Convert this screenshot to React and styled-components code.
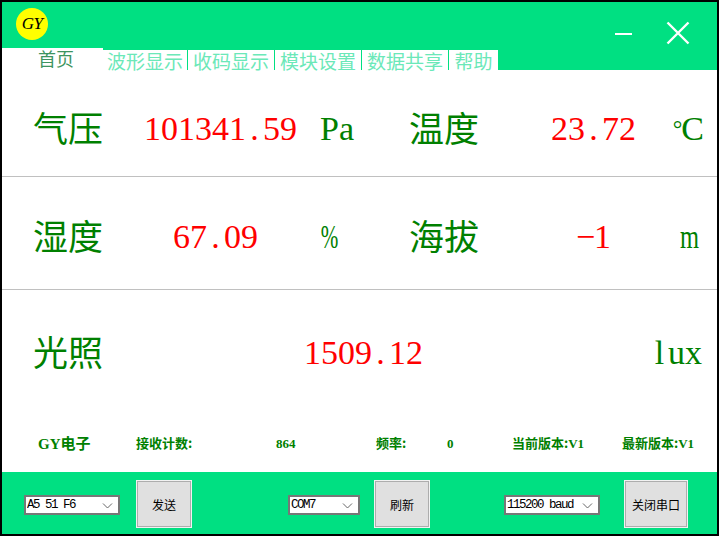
import React from 'react';
import styled, { createGlobalStyle } from 'styled-components';

const CJK = '"Noto Sans CJK SC", sans-serif';
const SERIF = '"Liberation Serif", "Noto Sans CJK SC", serif';
const GREEN = '#00e082';

const Global = createGlobalStyle`
  html, body { margin: 0; padding: 0; overflow: hidden; background: #000; }
  * { box-sizing: border-box; }
`;

const Win = styled.div`
  width: 719px; height: 536px; border: 2px solid #000; background: #fff;
  display: flex; flex-direction: column; font-family: ${SERIF}; overflow: hidden;
`;
const TitleBar = styled.header`
  height: 46px; flex: none; background: ${GREEN}; display: flex; align-items: flex-start;
  justify-content: space-between; padding: 6px 27px 0 14px;
`;
const Logo = styled.div`
  width: 32px; height: 32px; border-radius: 50%; background: #ffff00; color: #000;
  display: flex; align-items: center; justify-content: center;
  font: italic 17px "Liberation Serif", serif; letter-spacing: -0.5px;
`;
const WinControls = styled.div`display: flex; gap: 34px; padding-top: 12px;`;
const Icon = styled.svg`display: block; flex: none;`;

const TabBar = styled.nav`
  height: 22px; flex: none; display: flex; gap: 1px; align-items: flex-end;
  background: ${GREEN};
`;
const ActiveTab = styled.div`
  width: 101px; height: 22px; margin-right: -1px; background: #fff; color: #3d9460;
  font: 18px/20px ${CJK}; padding-left: 36px;
`;
const Tab = styled.div`
  height: 20px; width: ${p => p.$w}px; background: #fff; color: #6be8b8; text-align: center;
  font: 19px/21px ${CJK}; white-space: nowrap;
`;

const Row = styled.section`
  height: ${p => p.$h}px; flex: none; padding: ${p => p.$top}px 0 0 31px;
  border-bottom: ${p => (p.$line ? '1px solid #c0c0c0' : 'none')};
  display: grid; grid-template-columns: 111px 176px 89px 71px 1fr 70px; align-items: start; align-content: start;
`;
const WideRow = styled(Row)`grid-template-columns: 271px 1fr 70px;`;
const Label = styled.div`color: #008000; font: 35px/46px ${CJK};`;
const Value = styled.div`
  color: #ff0000; font: 34px/50px ${SERIF}; padding-left: ${p => p.$indent || 0}px; white-space: nowrap;
`;
const Ch = styled.span`
  display: inline-flex; width: 0.5em; justify-content: center;
  transform: scaleX(${p => p.$squeeze || 1});
`;
const Unit = styled.div`
  color: #008000; font: 34px/50px ${SERIF}; white-space: nowrap;
  text-align: ${p => (p.$end ? 'right' : 'left')}; padding-right: ${p => p.$end || 0}px;
  padding-left: ${p => p.$start || 0}px;
`;
const Degrees = styled.span`font-size: 24px; vertical-align: 3px; letter-spacing: -2px; margin-right: 1px;`;

const Status = styled.div`
  flex: 1; display: grid; grid-template-columns: 98px 140px 100px 71px 65px 110px 1fr;
  padding: 10px 0 0 36px; align-content: start; align-items: center; color: #008000;
  font: bold 13px/26px ${SERIF}; white-space: nowrap;
`;
const Brand = styled.div`font: bold 15px/26px ${SERIF};`;
const CN = styled.span`font-family: ${CJK};`;

const Footer = styled.footer`
  height: 62px; flex: none; background: ${GREEN}; display: flex; align-items: center;
  padding: 2px 0 0 22px;
`;
const SelectBox = styled.div`
  position: relative; width: ${p => p.$w}px; height: 20px; margin-right: ${p => p.$gap}px;
  margin-top: 2px; flex: none;
`;
const Select = styled.select`
  appearance: none; width: 100%; height: 100%; display: block; background: #fff; color: #000;
  border: 2px solid #777; border-radius: 0;
  padding: 0 0 0 1px; font: 12.5px "Liberation Mono", monospace; letter-spacing: -1.5px;
`;
const Chevron = styled.svg`position: absolute; right: 7px; top: 8px; pointer-events: none;`;
const Button = styled.button`
  width: ${p => p.$w}px; height: 48px; flex: none; margin-right: ${p => p.$gap}px;
  background: #e0e0e0; border: 1px solid #f2f2f2; outline: 1px solid #adadad; outline-offset: -2px;
  color: #000; font: 12px ${CJK}; padding: 0; border-radius: 0;
`;

const Num = ({ text }) => [...text].map((c, i) => <Ch key={i}>{c}</Ch>);
const Sel = ({ w, gap, children }) => (
  <SelectBox $w={w} $gap={gap}>
    <Select defaultValue={children}><option>{children}</option></Select>
    <Chevron width="11" height="6" viewBox="0 0 11 6" fill="none" stroke="#666" strokeWidth="1">
      <path d="M1 0.5l4.5 4.5 4.5-4.5" />
    </Chevron>
  </SelectBox>
);

export default function App() {
  return (
    <>
      <Global />
      <Win>
        <TitleBar>
          <Logo>GY</Logo>
          <WinControls>
            <Icon width="18" height="24" viewBox="0 0 18 24" stroke="#fff" strokeWidth="2"><path d="M1 14h17" /></Icon>
            <Icon width="24" height="24" viewBox="0 0 24 24" stroke="#fff" strokeWidth="2.4" style={{ marginTop: 1 }}><path d="M1.5 1.5l21 21M22.5 1.5l-21 21" /></Icon>
          </WinControls>
        </TitleBar>
        <TabBar>
          <ActiveTab>首页</ActiveTab>
          <Tab $w={84}>波形显示</Tab>
          <Tab $w={86}>收码显示</Tab>
          <Tab $w={86}>模块设置</Tab>
          <Tab $w={86}>数据共享</Tab>
          <Tab $w={49}>帮助</Tab>
        </TabBar>
        <Row $h={107} $top={34} $line>
          <Label>气压</Label>
          <Value><Num text="101341.59" /></Value>
          <Unit $start={1}><Num text="Pa" /></Unit>
          <Label>温度</Label>
          <Value $indent={71}><Num text="23.72" /></Value>
          <Unit $end={13}><Degrees>°</Degrees>C</Unit>
        </Row>
        <Row $h={113} $top={35} $line>
          <Label>湿度</Label>
          <Value $indent={29}><Num text="67.09" /></Value>
          <Unit $start={1}><Ch $squeeze={0.62}>%</Ch></Unit>
          <Label>海拔</Label>
          <Value $indent={97}><Num text="−1" /></Value>
          <Unit $end={19}><Ch $squeeze={0.72}>m</Ch></Unit>
        </Row>
        <WideRow $h={130} $top={38}>
          <Label>光照</Label>
          <Value><Num text="1509.12" /></Value>
          <Unit $end={15}><Num text="lux" /></Unit>
        </WideRow>
        <Status>
          <Brand>GY<CN>电子</CN></Brand>
          <div><CN>接收计数:</CN></div>
          <div>864</div>
          <div><CN>频率:</CN></div>
          <div>0</div>
          <div><CN>当前版本:</CN>V1</div>
          <div><CN>最新版本:</CN>V1</div>
        </Status>
        <Footer>
          <Sel w={96} gap={16}>A5 51 F6</Sel>
          <Button $w={56} $gap={96}>发送</Button>
          <Sel w={72} gap={14}>COM7</Sel>
          <Button $w={56} $gap={74}>刷新</Button>
          <Sel w={96} gap={24}>115200 baud</Sel>
          <Button $w={64} $gap={0}>关闭串口</Button>
        </Footer>
      </Win>
    </>
  );
}
